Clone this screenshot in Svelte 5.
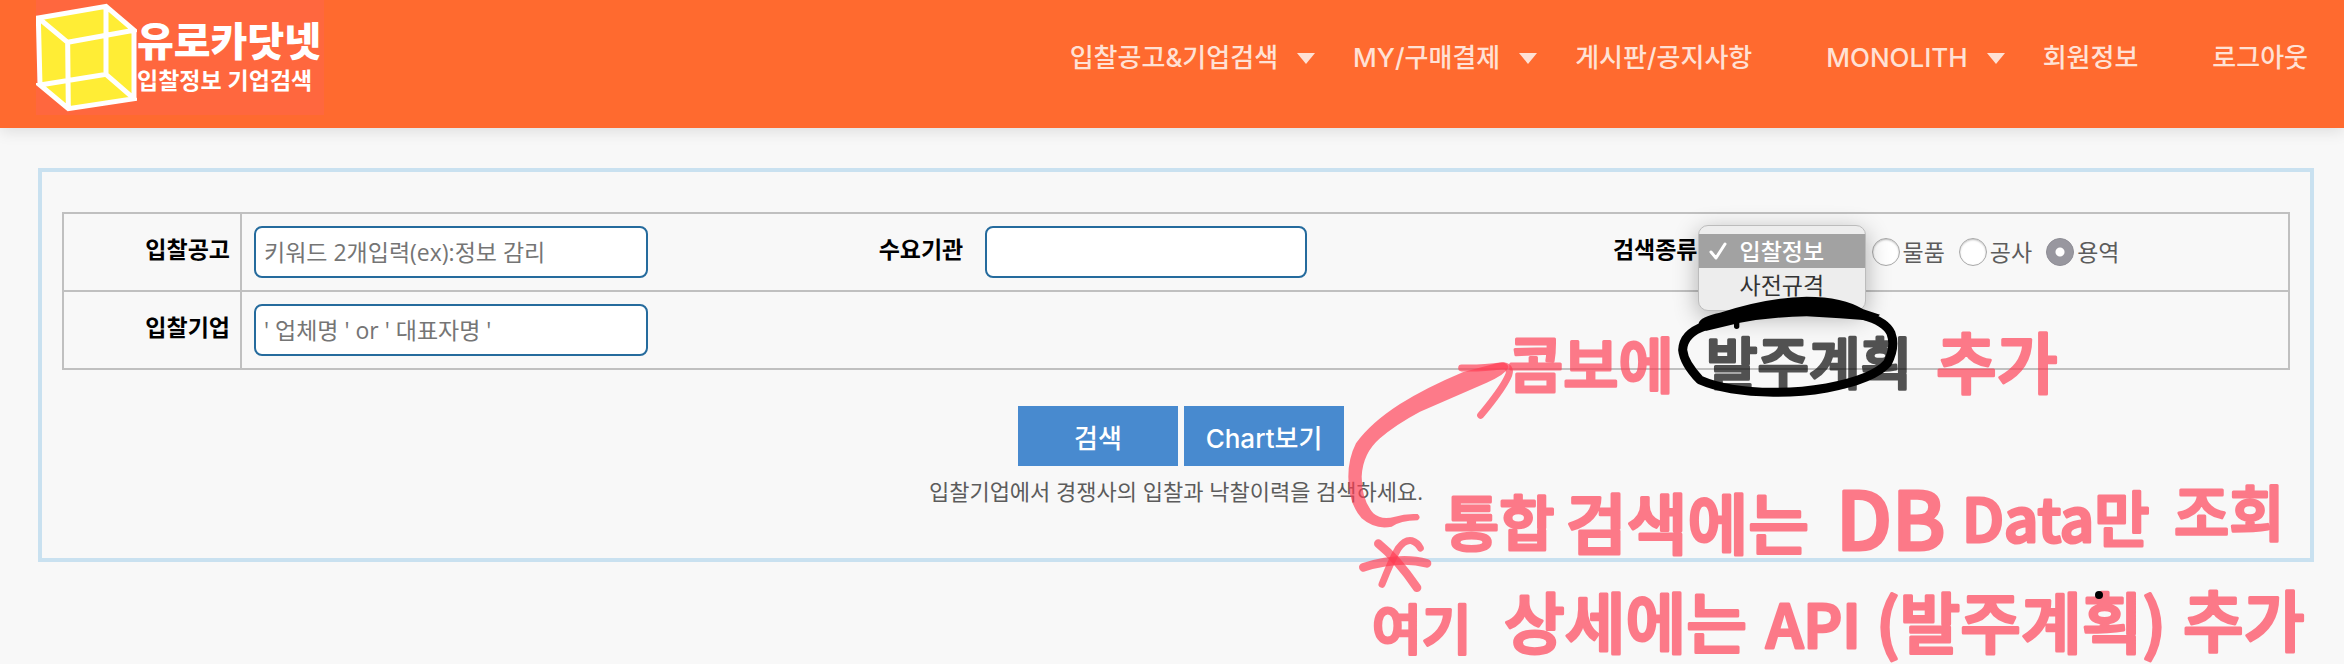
<script>
  const menu = [
    { label: '입찰공고&기업검색', sub: true },
    { label: 'MY/구매결제', sub: true },
    { label: '게시판/공지사항', sub: false },
    { label: 'MONOLITH', sub: true },
    { label: '회원정보', sub: false },
    { label: '로그아웃', sub: false }
  ];
  const searchTypes = ['입찰정보', '사전규격'];
  const categories = ['물품', '공사', '용역'];

  let searchType = $state('입찰정보');
  let category = $state('용역');

  const notes = [
    { text: '콤보에', x: 1508, y: 388, size: 60 },
    { text: '추가', x: 1936, y: 388, size: 66 },
    { text: '통합', x: 1444, y: 546, size: 60 },
    { text: '검색에는', x: 1566, y: 549, size: 66 },
    { text: 'DB', x: 1836, y: 550, size: 80 },
    { text: 'Data만', x: 1962, y: 542, size: 60 },
    { text: '조회', x: 2174, y: 536, size: 60 },
    { text: '여기', x: 1372, y: 650, size: 54 },
    { text: '상세에는', x: 1504, y: 648, size: 66 },
    { text: 'API', x: 1766, y: 648, size: 60 },
    { text: '(발주계획)', x: 1876, y: 648, size: 66 },
    { text: '추가', x: 2183, y: 646, size: 66 }
  ];
</script>

<div class="page">
  <header>
    <a class="logo" href="#home">
      <svg class="cube" viewBox="108 0 303 345" aria-hidden="true">
        <path d="M113 53 318 18 403 90 403 297 205 327 120 255Z" fill="#ffed35" />
        <path
          d="M115 54 318 19 402 91 203 127Z M120 255 318 223 402 296 205 326Z M115 54 120 255 M318 19V223 M402 91V296 M203 127 205 326"
          fill="none" stroke="#fff" stroke-width="15" />
      </svg>
      <span class="names">
        <strong>유로카닷넷</strong>
        <span>입찰정보 기업검색</span>
      </span>
    </a>
    <nav>
      {#each menu as item}
        <a href="#menu" class:sub={item.sub}>{item.label}</a>
      {/each}
    </nav>
  </header>

  <main>
    <form onsubmit={(e) => e.preventDefault()}>
      <table>
        <colgroup>
          <col class="c-head" /><col class="c-field" /><col class="c-agency" />
          <col class="c-field" /><col class="c-kind" /><col />
        </colgroup>
        <tbody>
          <tr>
            <th class="line"><label for="notice">입찰공고</label></th>
            <td><input id="notice" class="wide" type="text" placeholder="키워드 2개입력(ex):정보 감리" /></td>
            <th><label for="agency">수요기관</label></th>
            <td><input id="agency" class="mid" type="text" /></td>
            <th class="tight"><label for="kind">검색종류</label></th>
            <td class="flush">
              <div class="kinds">
                <div class="combo">
                  <select id="kind" bind:value={searchType}>
                    {#each searchTypes as t}<option>{t}</option>{/each}
                  </select>
                  <ul class="popup">
                    {#each searchTypes as t}
                      <li class:on={t === searchType}>
                        {#if t === searchType}
                          <svg viewBox="0 0 20 20" aria-hidden="true"><path d="M3 11 8 17 17 3" /></svg>
                        {/if}
                        {t}
                      </li>
                    {/each}
                  </ul>
                </div>
                {#each categories as c}
                  <label class="radio"><input type="radio" name="category" value={c} bind:group={category} />{c}</label>
                {/each}
              </div>
            </td>
          </tr>
          <tr>
            <th class="line"><label for="company">입찰기업</label></th>
            <td colspan="5"><input id="company" class="wide" type="text" placeholder="' 업체명 ' or ' 대표자명 '" /></td>
          </tr>
        </tbody>
      </table>
      <div class="actions">
        <button type="submit">검색</button>
        <button type="button">Chart보기</button>
      </div>
      <p>입찰기업에서 경쟁사의 입찰과 낙찰이력을 검색하세요.</p>
    </form>
  </main>

  <svg class="ink" viewBox="0 0 2344 664">
    <g class="dark"><text x="1706" y="384" font-size="56">발주계획</text></g>
    <g class="red">
      {#each notes as n}
        <text x={n.x} y={n.y} font-size={n.size}>{n.text}</text>
      {/each}
    </g>
    <!-- arrow from the asterisk up to the combo note -->
    <g transform="translate(1320 280) scale(.33333)">
      <path
        class="fill"
        d="M293 702Q255 700 225 710Q185 722 160 700Q125 660 125 590Q128 520 180 475Q225 435 300 395L500 308Q555 285 566 262Q560 242 530 250L430 276Q320 322 240 372Q150 430 108 490Q85 535 85 590Q85 670 125 715Q165 750 215 740Q240 722 293 721Q305 712 293 702Z" />
      <path class="stroke thin" d="M425 264Q480 266 550 257Q578 262 563 292Q545 330 482 406" />
      <path class="stroke" d="M175 791Q230 835 291 923" />
      <path class="stroke" d="M130 862Q240 828 321 850" />
      <path class="stroke thin" d="M186 913Q215 840 235 805Q255 778 275 782Q293 788 301 804" />
    </g>
    <!-- ring round the missing option -->
    <g transform="translate(1640 280) scale(.33333)">
      <path
        class="ring"
        d="M195 138Q130 160 128 210Q132 250 180 300Q260 335 400 337Q480 338 560 324Q700 298 742 250Q768 200 753 160Q738 125 670 106" />
      <path d="M176 130Q180 110 240 98Q380 52 500 50Q610 50 670 88L720 104 700 122Q600 114 500 109Q400 110 300 128L200 152Q175 150 176 130Z" />
      <path class="tick" d="M290 122V139" />
    </g>
    <circle cx="2099" cy="595" r="4" />
  </svg>
</div>

<style>
  :global(body) {
    margin: 0;
    background: #f8f8f8;
  }
  .page {
    position: relative;
    font-family: 'Open Sans', 'Noto Sans CJK KR', sans-serif;
    font-size: 23px;
    color: #5c5c5c;
  }
  header {
    display: flex;
    justify-content: space-between;
    align-items: flex-start;
    height: 128px;
    padding-left: 36px;
    background: #ff6a2f;
    box-shadow: 0 4px 14px rgba(0, 0, 0, 0.1);
  }
  .logo {
    display: flex;
    width: 288px;
    height: 115px;
    background: #ff673e;
    color: #fff;
    text-decoration: none;
    font-weight: 700;
    white-space: nowrap;
  }
  .cube {
    flex: none;
    width: 101px;
    height: 115px;
  }
  .names {
    display: flex;
    flex-direction: column;
    gap: 6px;
    padding-top: 20px;
  }
  .names strong {
    font-size: 40px;
    line-height: 42px;
  }
  .names span {
    font-size: 23px;
    line-height: 24px;
  }
  nav {
    display: flex;
    height: 116px;
    align-items: center;
  }
  nav a {
    display: flex;
    align-items: center;
    padding-right: 74px;
    color: #ffe1d5;
    font-family: Inter, 'Noto Sans CJK KR', sans-serif;
    font-size: 26px;
    font-weight: 500;
    line-height: 36px;
    text-decoration: none;
    white-space: nowrap;
  }
  nav a:last-child {
    padding-right: 36px;
  }
  nav a.sub {
    padding-right: 38px;
  }
  .sub::after {
    content: '';
    margin-left: 19px;
    border: 9px solid transparent;
    border-top: 11px solid #ffe1d5;
    border-bottom: 0;
  }
  main {
    padding: 40px 30px 102px 38px;
  }
  form {
    padding: 40px 20px 50px;
    border: 4px solid #c9e1f0;
  }
  table {
    width: 100%;
    table-layout: fixed;
    border-collapse: collapse;
    border: 2px solid #c0c0c0;
  }
  .c-head {
    width: 178px;
  }
  .c-field {
    width: 28%;
  }
  .c-agency {
    width: 109px;
  }
  .c-kind {
    width: 101px;
  }
  tr {
    border-bottom: 2px solid #c0c0c0;
  }
  th,
  td {
    height: 52px;
    padding: 12px;
  }
  th {
    padding: 0 10px 8px 0;
    color: #000;
    font-weight: 700;
    text-align: right;
    white-space: nowrap;
  }
  th.line {
    border-right: 2px solid #c0c0c0;
  }
  th.tight {
    padding-right: 0;
  }
  td.flush {
    padding-left: 0;
  }
  input[type='text'] {
    display: block;
    box-sizing: border-box;
    height: 52px;
    max-width: 100%;
    padding: 0 8px;
    border: 2px solid #256b9d;
    border-radius: 8px;
    background: #fff;
    font: inherit;
  }
  input::placeholder {
    color: #757575;
    opacity: 1;
  }
  .wide {
    width: 394px;
  }
  .mid {
    width: 322px;
  }
  .kinds {
    display: flex;
    align-items: center;
    gap: 14px;
  }
  .combo {
    position: relative;
    width: 168px;
    height: 34px;
    margin-right: -8px;
  }
  select {
    width: 100%;
    height: 34px;
    border: 0;
    font: inherit;
  }
  .popup {
    position: absolute;
    top: -10px;
    left: 0;
    box-sizing: border-box;
    width: 100%;
    margin: 0;
    padding: 8px 0;
    border: 1px solid #bcbcbc;
    border-radius: 10px;
    background: #ededed;
    box-shadow: 0 6px 24px rgba(0, 0, 0, 0.3);
    color: #333;
    list-style: none;
  }
  .popup li {
    position: relative;
    padding-left: 41px;
    line-height: 34px;
  }
  .popup .on {
    background: #a2a2a2;
    color: #fff;
    font-weight: 500;
  }
  .popup svg {
    position: absolute;
    top: 7px;
    left: 9px;
    width: 20px;
    height: 20px;
    fill: none;
    stroke: #fff;
    stroke-width: 3;
    stroke-linecap: round;
    stroke-linejoin: round;
  }
  .radio {
    display: flex;
    align-items: center;
    gap: 3px;
    line-height: 34px;
    white-space: nowrap;
  }
  .radio input {
    appearance: none;
    width: 28px;
    height: 28px;
    margin: 0;
    border: 1px solid #a9a9a9;
    border-radius: 50%;
    background: #fff;
    box-shadow: inset 0 1px 2px rgba(0, 0, 0, 0.25);
  }
  .radio input:checked {
    border-color: #8e8d95;
    background: radial-gradient(circle, #fff 4px, #98979f 5px);
    box-shadow: none;
  }
  .actions {
    display: flex;
    justify-content: center;
    gap: 6px;
    padding: 36px 0 0 10px;
  }
  button {
    width: 160px;
    height: 60px;
    padding: 0;
    border: 0;
    background: #488acf;
    color: #fff;
    font-family: Inter, 'Noto Sans CJK KR', sans-serif;
    font-size: 26px;
    font-weight: 500;
  }
  p {
    margin: 8px 0 0;
    font-size: 22px;
    line-height: 34px;
    text-align: center;
  }
  .ink {
    position: absolute;
    top: 0;
    left: 0;
    width: 100%;
    overflow: visible;
    pointer-events: none;
  }
  .ink text {
    font-family: 'Noto Sans CJK KR', sans-serif;
    font-weight: 500;
    stroke-width: 3;
    stroke-linejoin: round;
  }
  .dark {
    opacity: 0.67;
    fill: #000;
    stroke: #000;
  }
  .red {
    opacity: 0.67;
    fill: #ff3c52;
    stroke: #ff3c52;
  }
  .fill {
    fill: #ff3c52;
    opacity: 0.67;
  }
  .stroke {
    fill: none;
    stroke: #ff3c52;
    stroke-width: 26;
    stroke-linecap: round;
    stroke-linejoin: round;
    opacity: 0.67;
  }
  .thin {
    stroke-width: 21;
  }
  .ring,
  .tick {
    fill: none;
    stroke: #000;
    stroke-width: 27;
    stroke-linecap: round;
    stroke-linejoin: round;
  }
  .tick {
    stroke-width: 16;
  }
</style>
